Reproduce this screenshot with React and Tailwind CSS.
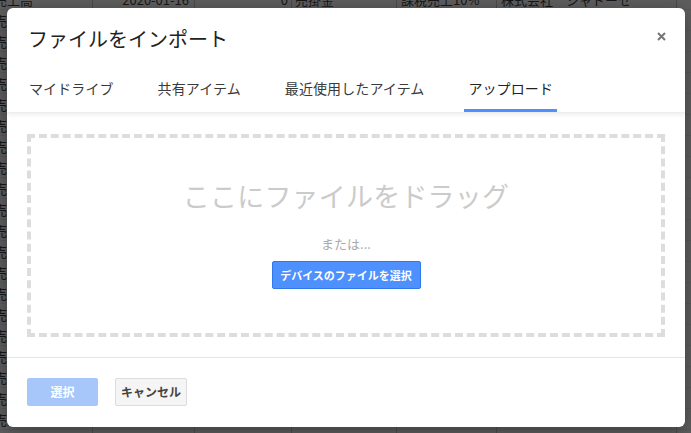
import React from 'react';

const tabs = ['マイドライブ', '共有アイテム', '最近使用したアイテム', 'アップロード'];
const rowCount = 22;

function Sheet() {
  return (
    <div className="-mt-[11px] text-[13px] leading-[21px] text-[#171717]">
      {Array.from({ length: rowCount }).map((_, i) => (
        <div key={i} className="flex h-[21px] border-b border-[#585858]">
          <div className="w-[93px] shrink-0 overflow-hidden whitespace-nowrap border-r border-[#4a4a4a]">
            <span className="-ml-[6px] inline-block">売上高</span>
          </div>
          <div className="w-[102px] shrink-0 pr-[5px] text-right border-r border-[#4a4a4a]">
            {i === 0 ? '2020-01-16' : ''}
          </div>
          <div className="w-[97px] shrink-0 pr-[3px] text-right border-r border-[#4a4a4a]">
            {i === 0 ? '0' : ''}
          </div>
          <div className="w-[105px] shrink-0 pl-[3px] border-r border-[#4a4a4a]">
            {i === 0 ? '売掛金' : ''}
          </div>
          <div className="w-[100px] shrink-0 pl-[4px] border-r border-[#4a4a4a]">
            {i === 0 ? '課税売上10%' : ''}
          </div>
          <div className="w-[180px] shrink-0 pl-[4px] whitespace-nowrap border-r border-[#4a4a4a]">
            {i === 0 ? '株式会社　シャドーセ' : ''}
          </div>
          <div className="flex-1" />
        </div>
      ))}
    </div>
  );
}

function ImportDialog() {
  return (
    <div className="absolute left-[7px] top-[8px] w-[678px] h-[419px] rounded-[6px] bg-white shadow-[0_4px_18px_rgba(0,0,0,0.35)] flex flex-col overflow-hidden">
      {/* header */}
      <div className="relative z-10 shadow-[0_2px_4px_rgba(0,0,0,0.07)] border-b border-[#eeeeee]">
        <div className="flex items-center justify-between pl-[21px] pr-[19px] pt-[17px]">
          <h1 className="text-[20px] leading-[28px] text-[#222]">ファイルをインポート</h1>
          <button className="-mt-[5px] text-[#777]">
            <svg width="9" height="9" viewBox="0 0 9 9">
              <path d="M1 1 L8 8 M8 1 L1 8" stroke="currentColor" strokeWidth="2" />
            </svg>
          </button>
        </div>
        <div className="flex gap-[36px] pl-[18px] mt-[25px]">
          {tabs.map((t, i) => (
            <div
              key={t}
              className={`px-[4px] pb-[11px] text-[14px] leading-[20px] tracking-[0.1px] border-b-[3px] ${
                i === 3 ? 'border-[#4d90fe] text-[#222]' : 'border-transparent text-[#3a3a3a]'
              }`}
            >
              {t}
            </div>
          ))}
        </div>
      </div>

      {/* drop zone */}
      <div className="px-[20px] pt-[21px] pb-[20px]">
        <div className="h-[203px] border-4 border-dashed border-[#dddddd] flex flex-col items-center">
          <div className="pt-[40px] text-[27px] leading-[36px] tracking-[0.2px] text-[#cbcbcb]">ここにファイルをドラッグ</div>
          <div className="mt-[21px] text-[13px] leading-[18px] text-[#aaaaaa]">または...</div>
          <button className="mt-[8px] h-[28px] w-[149px] rounded-[2px] border border-[#3079ed] bg-[#4d90fe] text-[11px] font-bold text-white">
            デバイスのファイルを選択
          </button>
        </div>
      </div>

      {/* footer */}
      <div className="flex-1 border-t border-[#e5e5e5] px-[20px] pt-[20px] flex gap-[17px] items-start">
        <button className="h-[28px] w-[71px] rounded-[2px] bg-[#a7c7fb] text-[12px] font-bold text-white">選択</button>
        <button className="h-[28px] w-[72px] rounded-[2px] border border-[#dcdcdc] bg-[#f5f5f5] text-[12px] font-bold text-[#444]">
          キャンセル
        </button>
      </div>
    </div>
  );
}

export default function App() {
  return (
    <div className="relative w-[691px] h-[433px] overflow-hidden bg-[#5e5e5e] font-['Noto_Sans_CJK_JP',sans-serif]">
      <Sheet />
      <ImportDialog />
    </div>
  );
}
